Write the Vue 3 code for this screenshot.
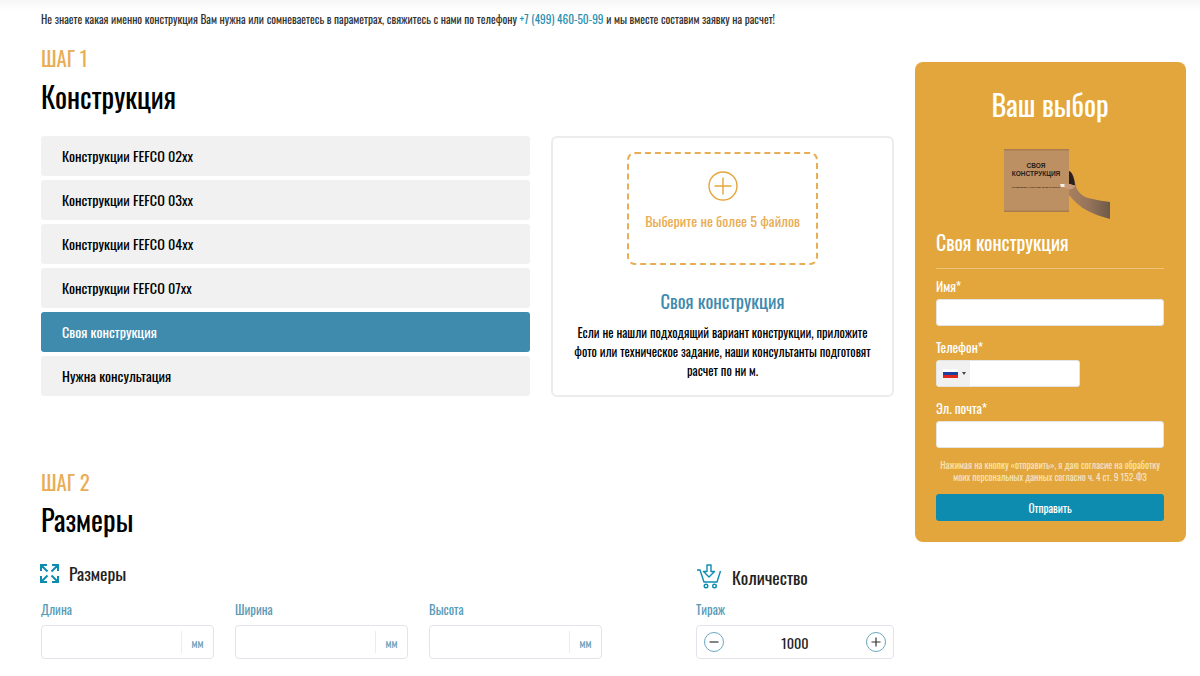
<script setup>
const options = [
  { label: 'Конструкции FEFCO 02xx', active: false },
  { label: 'Конструкции FEFCO 03xx', active: false },
  { label: 'Конструкции FEFCO 04xx', active: false },
  { label: 'Конструкции FEFCO 07xx', active: false },
  { label: 'Своя конструкция', active: true },
  { label: 'Нужна консультация', active: false }
]
const dims = ['Длина', 'Ширина', 'Высота']
</script>

<template>
  <div class="page">
    <main class="main">
      <p class="notice">
        Не знаете какая именно конструкция Вам нужна или сомневаетесь в параметрах, свяжитесь с нами по телефону
        <a class="phone">+7 (499) 460-50-99</a>
        и мы вместе составим заявку на расчет!
      </p>

      <div class="step step-one">ШАГ 1</div>
      <h2 class="title">Конструкция</h2>

      <section class="choose">
        <ul class="options">
          <li v-for="o in options" :key="o.label" class="option" :class="{ active: o.active }">{{ o.label }}</li>
        </ul>
        <div class="card">
          <div class="drop">
            <svg class="plus" width="30" height="30" viewBox="0 0 30 30" fill="none" stroke="#e3a63c" stroke-width="1.4">
              <circle cx="15" cy="15" r="14" />
              <path d="M15 6.5v17M6.5 15h17" />
            </svg>
            <span class="drop-text">Выберите не более 5 файлов</span>
          </div>
          <h3 class="card-title">Своя конструкция</h3>
          <p class="card-text">Если не нашли подходящий вариант конструкции, приложите фото или техническое задание, наши консультанты подготовят расчет по ни м.</p>
        </div>
      </section>

      <div class="step step-two">ШАГ 2</div>
      <h2 class="title title-two">Размеры</h2>

      <section class="params">
        <div class="sizes">
          <div class="sub sub-sizes">
            <svg width="19" height="19" viewBox="0 0 19 19" fill="none" stroke="#0e8cb0" stroke-width="2">
              <path d="M1 7V1h6M1 1l6.500 6.500M12 1h6v6M18 1l-6.500 6.500M1 12v6h6M1 18l6.500-6.500M12 18h6v-6M18 18l-6.500-6.500" />
            </svg>
            <span>Размеры</span>
          </div>
          <div class="fields">
            <label v-for="d in dims" :key="d" class="field">
              <span class="field-label">{{ d }}</span>
              <span class="box">
                <input class="num" type="text" />
                <span class="unit">мм</span>
              </span>
            </label>
          </div>
        </div>
        <div class="qty">
          <div class="sub sub-qty">
            <svg width="26" height="25" viewBox="0 0 26 25" fill="none" stroke="#0e8cb0" stroke-width="1.4">
              <path d="M1 6h3l4 12h13l3.500-11" />
              <path d="M11 7.500V1h4v6.500h3.500l-5.500 5.500-5.500-5.500z" stroke-linejoin="round" />
              <circle cx="10" cy="22" r="1.800" />
              <circle cx="18.500" cy="22" r="1.800" />
            </svg>
            <span>Количество</span>
          </div>
          <div class="field-label">Тираж</div>
          <div class="stepper">
            <svg width="20" height="20" viewBox="0 0 20 20" fill="none">
              <circle cx="10" cy="10" r="9.500" stroke="#6da6c1" />
              <path d="M5.500 10h9" stroke="#333" stroke-width="1.200" />
            </svg>
            <span class="count">1000</span>
            <svg width="20" height="20" viewBox="0 0 20 20" fill="none">
              <circle cx="10" cy="10" r="9.500" stroke="#6da6c1" />
              <path d="M5.500 10h9M10 5.500v9" stroke="#333" stroke-width="1.200" />
            </svg>
          </div>
        </div>
      </section>
    </main>

    <aside class="aside">
      <h2 class="aside-title">Ваш выбор</h2>
      <svg class="pic" width="106" height="71" viewBox="0 0 106 71">
        <defs>
          <linearGradient id="armg" x1="0" x2="1" y1="0" y2="0">
            <stop offset="0" stop-color="#a9805f" />
            <stop offset="0.5" stop-color="#94735a" />
            <stop offset="1" stop-color="#6e5a48" />
          </linearGradient>
        </defs>
        <path d="M65 23 L68 24 C70 28 71 33 72 38 C74 43 78 47 84 49 C92 51 99 52 106 53 L106 70 C98 68 90 65 84 62 C76 58 70 52 65 46Z" fill="url(#armg)" />
        <path d="M65 22 C68 23 70 28 71 36 L65 36Z" fill="#2a211c" />
        <rect x="0" y="0" width="65" height="63" fill="#bd9063" />
        <rect x="0" y="0" width="65" height="1.500" fill="#a97c4f" />
        <rect x="0" y="61.500" width="65" height="1.500" fill="#a97c4f" />
        <path d="M56 35 C60 34 67 34 71 37 C70 41 64 41 59 38Z" fill="#c99a7a" />
        <path d="M56 35h4.500v3H57Z" fill="#f3efe9" />
        <text x="32" y="19" class="box-t">СВОЯ</text>
        <text x="32" y="27" class="box-t">КОНСТРУКЦИЯ</text>
        <text x="32" y="39" class="box-s">ПРИВЕЗЕМ К НУЖНОМУ ВАМ ПРОЕКТУ</text>
      </svg>
      <h3 class="aside-sub">Своя конструкция</h3>
      <form class="form">
        <label class="aside-label first">Имя*</label>
        <input class="aside-input" type="text" />
        <label class="aside-label">Телефон*</label>
        <div class="tel">
          <div class="flag-box">
            <span class="flag"><i class="w"></i><i class="b"></i><i class="r"></i></span>
            <span class="caret"></span>
          </div>
          <input class="tel-input" type="text" />
        </div>
        <label class="aside-label">Эл. почта*</label>
        <input class="aside-input" type="text" />
        <p class="consent">Нажимая на кнопку «отправить», я даю согласие на обработку моих персональных данных согласно ч. 4 ст. 9 152-ФЗ</p>
        <button class="send" type="button">Отправить</button>
      </form>
    </aside>
  </div>
</template>

<style>
html, body { margin: 0; background: #fff; }
</style>

<style scoped>
* { box-sizing: border-box; }
.page {
  height: 676px;
  overflow: hidden;
  display: flex;
  align-items: flex-start;
  gap: 21px;
  padding: 0 14px 0 41px;
  font-family: "Oswald", "Roboto", sans-serif;
  font-weight: 400;
  color: #000;
  background: linear-gradient(#f6f6f6, #fff 10px);
}
.main { width: 853px; flex: none; }
.notice { margin: 11px 0 0; font-size: 11.340px; line-height: 15px; color: #333; white-space: nowrap; }
.phone { color: #2a8fb0; }
.step { font-size: 20.800px; line-height: 28px; color: #e9ad55; }
.step-one { margin-top: 18px; }
.step-two { margin-top: 71px; }
.title { margin: 5px 0 0; font-size: 28.350px; line-height: 38px; font-weight: 400; }
.title-two { margin-top: 4px; }
.choose { display: flex; gap: 21px; margin-top: 21px; align-items: flex-start; }
.options { list-style: none; margin: 0; padding: 0; width: 489px; display: flex; flex-direction: column; gap: 4px; }
.option { height: 40px; line-height: 40px; padding-left: 21px; background: #f1f1f1; border-radius: 3px; font-size: 14.170px; }
.option.active { background: #3f8bad; color: #fff; }
.card { width: 343px; height: 261px; border: 2px solid #ececec; border-radius: 6px; padding: 14px 14px 0; display: flex; flex-direction: column; align-items: center; }
.drop { width: 191px; height: 113px; border: 2px dashed #e9ad55; border-radius: 8px; display: flex; flex-direction: column; align-items: center; padding-top: 17px; }
.drop-text { margin-top: 11px; font-size: 14.170px; line-height: 18px; color: #e9ad55; white-space: nowrap; }
.plus { display: block; }
.card-title { margin: 24px 0 0; font-size: 18.500px; line-height: 24px; font-weight: 400; color: #3f8bad; }
.card-text { margin: 10px 0 0; font-size: 12.600px; line-height: 19px; text-align: center; width: 305px; }
.params { display: flex; margin-top: 26px; }
.sizes { width: 655px; }
.sub { display: flex; align-items: center; font-size: 17.600px; line-height: 24px; color: #222; }
.sub-sizes { gap: 10px; margin-top: -3px; margin-left: -1px; }
.sub-qty { gap: 10px; height: 25px; }
.fields { display: flex; gap: 21px; margin-top: 16px; }
.field { display: block; width: 173px; }
.field-label { display: block; font-size: 12.700px; line-height: 18px; color: #5a9bb8; }
.box { display: flex; align-items: center; height: 34px; margin-top: 6px; border: 1px solid #e1e4ea; border-radius: 4px; padding: 5px 0; }
.num { flex: 1; min-width: 0; border: 0; outline: 0; background: transparent; height: 22px; border-right: 1px solid #ececec; }
.unit { width: 31px; text-align: center; font-size: 11.340px; color: #6d9fb8; }
.qty { width: 198px; }
.qty .field-label { margin-top: 12px; }
.stepper { display: flex; align-items: center; justify-content: space-between; height: 34px; margin-top: 6px; padding: 0 7px; border: 1px solid #e1e4ea; border-radius: 4px; }
.count { font-size: 14.170px; color: #222; }
.aside { width: 271px; flex: none; margin-top: 62px; height: 480px; background: #e3a63c; border-radius: 8px; padding: 24px 22px 0 21px; display: flex; flex-direction: column; color: #fff; }
.aside-title { margin: 0; font-size: 28.350px; line-height: 36px; font-weight: 400; text-align: center; }
.pic { display: block; margin: 27px 0 0 68px; flex: none; }
.box-t { font-size: 6.500px; font-weight: 700; fill: #2a2018; text-anchor: middle; font-family: "Liberation Sans", sans-serif; }
.box-s { font-size: 2.500px; font-weight: 700; fill: #3a2c20; text-anchor: middle; font-family: "Liberation Sans", sans-serif; }
.aside-sub { margin: 10px 0 0; font-size: 19.800px; line-height: 24px; font-weight: 400; padding-bottom: 14px; border-bottom: 1px solid #f0c478; }
.form { display: flex; flex-direction: column; }
.aside-label { font-size: 13.200px; line-height: 18px; margin-top: 12px; }
.aside-label.first { margin-top: 8px; }
.aside-input { width: 228px; height: 27px; margin-top: 4px; background: #fff; border: 1px solid #e4e4e4; border-radius: 3px; outline: 0; }
.tel { display: flex; width: 144px; height: 27px; margin-top: 4px; background: #fff; border: 1px solid #e4e4e4; border-radius: 3px; overflow: hidden; }
.flag-box { width: 33px; background: #f1f1f1; display: flex; align-items: center; padding-left: 6px; gap: 4px; flex: none; }
.flag { width: 15px; height: 10px; display: flex; flex-direction: column; }
.flag i { flex: 1; display: block; }
.flag .w { background: #fff; }
.flag .b { background: #1c3fa0; }
.flag .r { background: #e0261c; }
.caret { width: 0; height: 0; border-left: 2.500px solid transparent; border-right: 2.500px solid transparent; border-top: 3px solid #444; }
.tel-input { flex: 1; min-width: 0; border: 0; outline: 0; background: #fff; }
.consent { margin: 11px 0 0; font-size: 9.450px; line-height: 12px; text-align: center; color: #f6e3bc; }
.send { height: 27px; margin-top: 11px; border: 0; border-radius: 3px; background: #0e8cb0; color: #fff; font: inherit; font-size: 11.340px; font-weight: 400; }
</style>
